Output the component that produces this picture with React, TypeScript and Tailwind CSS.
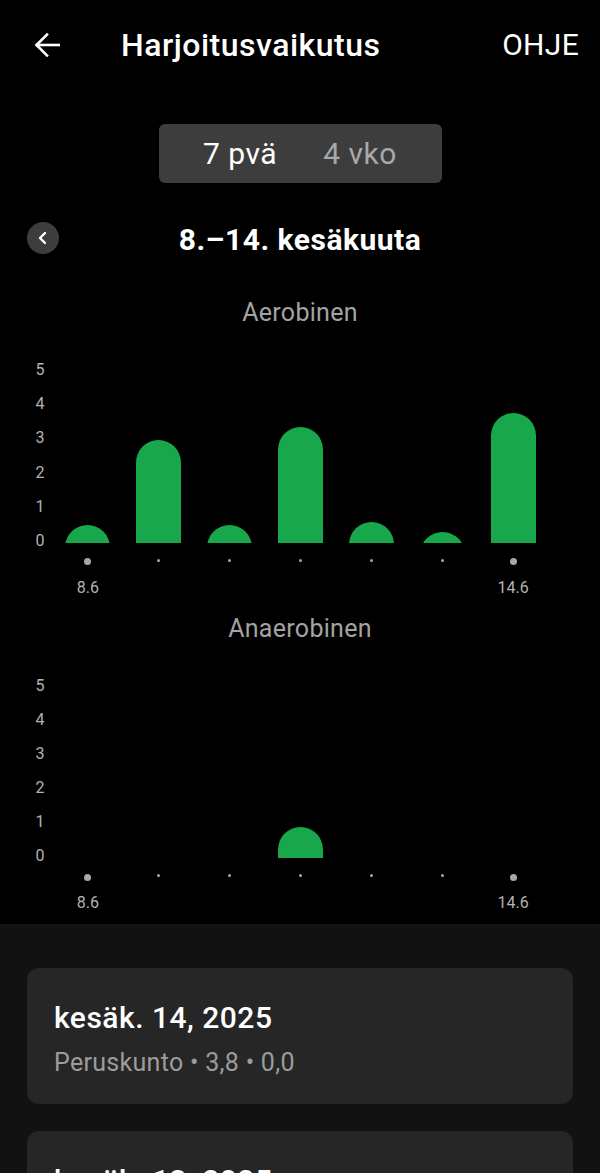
import React from "react";

const UNIT = 34.1;
const aero = [0.5, 3.0, 0.5, 3.4, 0.6, 0.3, 3.8];
const anaero = [0, 0, 0, 0.9, 0, 0, 0];

function Chart({ title, data }: { title: string; data: number[] }) {
  return (
    <div className="flex flex-col">
      <div className="h-[30px] flex items-center justify-center text-[25px] tracking-[0.3px] text-[#a3a3a3]">{title}</div>
      <div className="mt-[32px] flex">
        <div className="w-[52.5px] h-[191px] flex flex-col justify-between pr-[8px] text-right text-[16px] leading-[20px] text-[#b3b3b3]">
          {[5, 4, 3, 2, 1, 0].map((n) => (
            <div key={n}>{n}</div>
          ))}
        </div>
        <div className="w-[496px] flex flex-col">
          <div className="h-[182.5px] overflow-hidden flex items-end">
            {data.map((v, i) => (
              <div key={i} className="flex-1 h-full flex items-end justify-center">
                {v > 0 && (
                  <div
                    className="w-[45px] rounded-t-[22.5px] bg-[#18a84b]"
                    style={{ height: v * UNIT + 22.5, marginBottom: -22.5 }}
                  />
                )}
              </div>
            ))}
          </div>
          <div className="mt-[14px] h-[8px] flex items-center">
            {data.map((_, i) => (
              <div key={i} className="flex-1 flex justify-center">
                {i === 0 || i === data.length - 1 ? (
                  <div className="w-[7px] h-[7px] rounded-full bg-[#a8a8a8] mt-[2px]" />
                ) : (
                  <div className="w-[3px] h-[3px] rounded-full bg-[#a8a8a8] -mt-[1px]" />
                )}
              </div>
            ))}
          </div>
          <div className="mt-[13px] h-[20px] flex text-[16px] leading-[20px] text-[#b3b3b3]">
            {data.map((_, i) => (
              <div key={i} className="flex-1 text-center">
                {i === 0 ? "8.6" : i === data.length - 1 ? "14.6" : ""}
              </div>
            ))}
          </div>
        </div>
      </div>
    </div>
  );
}

function Card({ date, sub }: { date: string; sub: string }) {
  return (
    <div className="mx-[27px] rounded-[12px] bg-[#262626] pl-[27px] pt-[33px] pb-[26px]">
      <div className="text-[30px] leading-[34px] tracking-[0.5px] font-medium text-white">{date}</div>
      <div className="mt-[12.5px] text-[25px] leading-[30px] tracking-[0.3px] text-[#9c9c9c]">{sub}</div>
    </div>
  );
}

export default function App() {
  return (
    <div
      className="w-[600px] h-[1173px] overflow-hidden bg-black text-white"
      style={{ fontFamily: "Roboto, 'Noto Sans', sans-serif" }}
    >
      <div className="h-[90px] flex items-center pl-[34px] pr-[21px]">
        <svg width="26" height="26" viewBox="0 0 26 26" fill="none" stroke="white" strokeWidth="2.6" strokeLinecap="square">
          <path d="M25 13H3" />
          <path d="M13 2.5L2.5 13L13 23.5" />
        </svg>
        <div className="ml-[61px] text-[32px] font-medium leading-[36px] tracking-[0.5px]">Harjoitusvaikutus</div>
        <div className="ml-auto text-[30px] leading-[36px] tracking-[0.3px]">OHJE</div>
      </div>

      <div className="mt-[34px] mx-auto w-[283px] h-[59px] rounded-[6px] bg-[#3d3d3d] flex items-center justify-center text-[30px] tracking-[0.5px]">
        <div className="w-[120px] text-center text-white">7 pvä</div>
        <div className="w-[120px] text-center text-[#a8a8a8]">4 vko</div>
      </div>

      <div className="mt-[27px] h-[56px] grid grid-cols-[1fr_auto_1fr] items-center">
        <div className="pl-[27px]">
          <div className="w-[32px] h-[32px] rounded-full bg-[#3d3d3d] flex items-center justify-center">
            <svg width="12" height="14" viewBox="0 0 12 14" fill="none" stroke="white" strokeWidth="2.4" strokeLinecap="round" strokeLinejoin="round">
              <path d="M8 2L3 7L8 12" />
            </svg>
          </div>
        </div>
        <div className="text-[30px] font-bold leading-[34px] tracking-[0.5px] pt-[3px]">8.–14. kesäkuuta</div>
        <div />
      </div>

      <div className="mt-[32px]">
        <Chart title="Aerobinen" data={aero} />
      </div>
      <div className="mt-[16px]">
        <Chart title="Anaerobinen" data={anaero} />
      </div>

      <div className="mt-[11px] bg-[#121212] pt-[44px] pb-[40px] flex flex-col gap-[27px]">
        <Card date="kesäk. 14, 2025" sub="Peruskunto • 3,8 • 0,0" />
        <Card date="kesäk. 13, 2025" sub="Palautuminen • 0,3 • 0,0" />
      </div>
    </div>
  );
}
